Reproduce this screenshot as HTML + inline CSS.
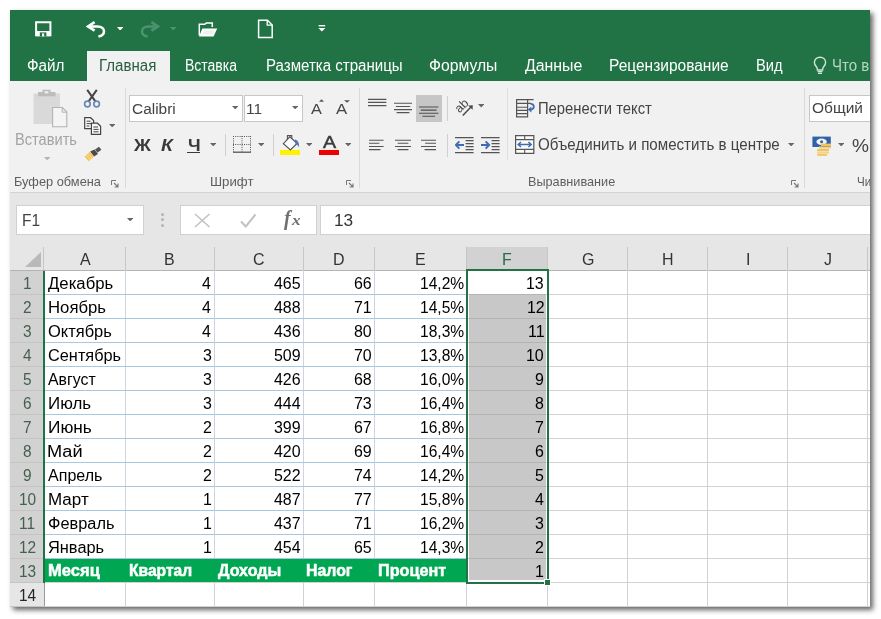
<!DOCTYPE html>
<html lang="ru"><head><meta charset="utf-8"><title>Excel</title>
<style>
html,body{margin:0;padding:0;background:#fff;}
body{width:881px;height:619px;position:relative;overflow:hidden;font-family:"Liberation Sans", sans-serif;}
#win{position:absolute;left:10px;top:10px;width:860px;height:597px;box-shadow:3px 3px 5px 0px rgba(0,0,0,.6);background:#fff;}
#clip{position:absolute;left:0;top:0;width:870px;height:607px;overflow:hidden;will-change:transform;}
.b{position:absolute;display:block;}
.t{position:absolute;white-space:nowrap;transform-origin:0 0;display:block;font-family:"Liberation Sans", sans-serif;}
.sf{font-family:"Liberation Serif", serif;}
</style></head><body>
<div id="win"></div>
<div id="clip">
<div class="b" style="left:10px;top:10px;width:860px;height:71px;background:#217346;"></div>
<div class="b" style="left:87px;top:51px;width:83px;height:30px;background:#f1f1f1;"></div>
<div class="b" style="left:10px;top:81px;width:860px;height:111px;background:#f1f1f1;"></div>
<div class="b" style="left:10px;top:192px;width:860px;height:1px;background:#d4d4d4;"></div>
<div class="b" style="left:10px;top:193px;width:860px;height:54px;background:#e6e6e6;"></div>
<div class="b" style="left:129px;top:95px;width:114px;height:27px;background:#fff;border:1px solid #c6c6c6;box-sizing:border-box;"></div>
<div class="b" style="left:244px;top:95px;width:59px;height:27px;background:#fff;border:1px solid #c6c6c6;box-sizing:border-box;"></div>
<div class="b" style="left:809px;top:95px;width:71px;height:27px;background:#fff;border:1px solid #c6c6c6;box-sizing:border-box;"></div>
<div class="b" style="left:416px;top:95px;width:26px;height:27px;background:#c6c6c6;"></div>
<div class="b" style="left:124.5px;top:88px;width:1px;height:100px;background:#dadada;"></div>
<div class="b" style="left:359px;top:88px;width:1px;height:100px;background:#dadada;"></div>
<div class="b" style="left:804px;top:88px;width:1px;height:100px;background:#dadada;"></div>
<div class="b" style="left:507px;top:88px;width:1px;height:72px;background:#dedede;"></div>
<div class="b" style="left:224.5px;top:134px;width:1px;height:22px;background:#d0d0d0;"></div>
<div class="b" style="left:272.5px;top:134px;width:1px;height:22px;background:#d0d0d0;"></div>
<div class="b" style="left:447px;top:96px;width:1px;height:25px;background:#d0d0d0;"></div>
<div class="b" style="left:447px;top:134px;width:1px;height:23px;background:#d0d0d0;"></div>
<svg class="b" style="left:231.8px;top:105.8px" width="6.4" height="3.4" viewBox="0 0 6.4 3.4"><path d="M0 0H6.4L3.2 3.4Z" fill="#666"/></svg>
<svg class="b" style="left:291.8px;top:105.8px" width="6.4" height="3.4" viewBox="0 0 6.4 3.4"><path d="M0 0H6.4L3.2 3.4Z" fill="#666"/></svg>
<svg class="b" style="left:209.8px;top:142.8px" width="6.4" height="3.4" viewBox="0 0 6.4 3.4"><path d="M0 0H6.4L3.2 3.4Z" fill="#666"/></svg>
<svg class="b" style="left:257.8px;top:142.8px" width="6.4" height="3.4" viewBox="0 0 6.4 3.4"><path d="M0 0H6.4L3.2 3.4Z" fill="#666"/></svg>
<svg class="b" style="left:305.8px;top:142.8px" width="6.4" height="3.4" viewBox="0 0 6.4 3.4"><path d="M0 0H6.4L3.2 3.4Z" fill="#666"/></svg>
<svg class="b" style="left:344.8px;top:142.8px" width="6.4" height="3.4" viewBox="0 0 6.4 3.4"><path d="M0 0H6.4L3.2 3.4Z" fill="#666"/></svg>
<svg class="b" style="left:477.8px;top:104.3px" width="6.4" height="3.4" viewBox="0 0 6.4 3.4"><path d="M0 0H6.4L3.2 3.4Z" fill="#666"/></svg>
<svg class="b" style="left:788.2px;top:142.8px" width="6.4" height="3.4" viewBox="0 0 6.4 3.4"><path d="M0 0H6.4L3.2 3.4Z" fill="#666"/></svg>
<svg class="b" style="left:837.8px;top:142.8px" width="6.4" height="3.4" viewBox="0 0 6.4 3.4"><path d="M0 0H6.4L3.2 3.4Z" fill="#666"/></svg>
<svg class="b" style="left:108.8px;top:123.8px" width="6.4" height="3.4" viewBox="0 0 6.4 3.4"><path d="M0 0H6.4L3.2 3.4Z" fill="#666"/></svg>
<svg class="b" style="left:43.8px;top:156.8px" width="6.4" height="3.4" viewBox="0 0 6.4 3.4"><path d="M0 0H6.4L3.2 3.4Z" fill="#b5b5b5"/></svg>
<div class="b" style="left:187.4px;top:152px;width:12.8px;height:1.3px;background:#3b3b3b;"></div>
<div class="b" style="left:279.7px;top:150px;width:20.3px;height:5px;background:#fff200;"></div>
<div class="b" style="left:319px;top:150.4px;width:20px;height:4.4px;background:#ee0000;"></div>
<svg class="b" style="left:319.4px;top:99px" width="5" height="3" viewBox="0 0 5 3"><path d="M0 2.8L2.5 0.2L5 2.8Z" fill="#555"/></svg>
<svg class="b" style="left:344.2px;top:99.8px" width="6" height="3" viewBox="0 0 6 3"><path d="M0 0.2L3 2.8L6 0.2Z" fill="#555"/></svg>
<svg class="b" style="left:110.5px;top:179.5px" width="8" height="8" viewBox="0 0 8 8"><path d="M0.5 5V0.5H5" fill="none" stroke="#777" stroke-width="1"/><path d="M3 3L7 7M7 3.6V7H3.6" fill="none" stroke="#777" stroke-width="1.1"/></svg>
<svg class="b" style="left:346px;top:179.5px" width="8" height="8" viewBox="0 0 8 8"><path d="M0.5 5V0.5H5" fill="none" stroke="#777" stroke-width="1"/><path d="M3 3L7 7M7 3.6V7H3.6" fill="none" stroke="#777" stroke-width="1.1"/></svg>
<svg class="b" style="left:790.5px;top:179.5px" width="8" height="8" viewBox="0 0 8 8"><path d="M0.5 5V0.5H5" fill="none" stroke="#777" stroke-width="1"/><path d="M3 3L7 7M7 3.6V7H3.6" fill="none" stroke="#777" stroke-width="1.1"/></svg>
<div class="b" style="left:16px;top:205px;width:128px;height:30px;background:#fff;border:1px solid #d0d0d0;box-sizing:border-box;"></div>
<div class="b" style="left:180px;top:205px;width:137px;height:30px;background:#fff;border:1px solid #d0d0d0;box-sizing:border-box;"></div>
<div class="b" style="left:320px;top:205px;width:560px;height:30px;background:#fff;border:1px solid #d0d0d0;box-sizing:border-box;"></div>
<svg class="b" style="left:126.8px;top:217.8px" width="6.4" height="3.4" viewBox="0 0 6.4 3.4"><path d="M0 0H6.4L3.2 3.4Z" fill="#666"/></svg>
<div class="b" style="left:160.5px;top:212.5px;width:3px;height:3px;background:#b4b4b4;border-radius:1.5px;"></div>
<div class="b" style="left:160.5px;top:218px;width:3px;height:3px;background:#b4b4b4;border-radius:1.5px;"></div>
<div class="b" style="left:160.5px;top:223.5px;width:3px;height:3px;background:#b4b4b4;border-radius:1.5px;"></div>
<svg class="b" style="left:194px;top:213px" width="17" height="15" viewBox="0 0 17 15"><path d="M1 1L15.5 14M15.5 1L1 14" stroke="#c2c2c2" stroke-width="1.6" fill="none"/></svg>
<svg class="b" style="left:240px;top:213px" width="17" height="15" viewBox="0 0 17 15"><path d="M1 8.5L5.8 13.5L15.5 1.5" stroke="#c2c2c2" stroke-width="2" fill="none"/></svg>
<div class="b" style="left:10px;top:247px;width:860px;height:23px;background:#e6e6e6;"></div>
<div class="b" style="left:44px;top:270px;width:826px;height:337px;background:#fff;"></div>
<div class="b" style="left:10px;top:270px;width:34px;height:337px;background:#e6e6e6;"></div>
<div class="b" style="left:10px;top:270px;width:34px;height:312px;background:#d2d2d2;"></div>
<div class="b" style="left:467px;top:247px;width:81px;height:23px;background:#d2d2d2;"></div>
<svg class="b" style="left:25px;top:252px" width="16" height="15" viewBox="0 0 16 15"><path d="M16 0V15H0Z" fill="#b9b9b9"/></svg>
<div class="b" style="left:43px;top:247px;width:1px;height:23px;background:#c6c6c6;"></div>
<div class="b" style="left:125px;top:247px;width:1px;height:23px;background:#c6c6c6;"></div>
<div class="b" style="left:214px;top:247px;width:1px;height:23px;background:#c6c6c6;"></div>
<div class="b" style="left:303px;top:247px;width:1px;height:23px;background:#c6c6c6;"></div>
<div class="b" style="left:374px;top:247px;width:1px;height:23px;background:#c6c6c6;"></div>
<div class="b" style="left:466px;top:247px;width:1px;height:23px;background:#c6c6c6;"></div>
<div class="b" style="left:547px;top:247px;width:1px;height:23px;background:#c6c6c6;"></div>
<div class="b" style="left:627px;top:247px;width:1px;height:23px;background:#c6c6c6;"></div>
<div class="b" style="left:707px;top:247px;width:1px;height:23px;background:#c6c6c6;"></div>
<div class="b" style="left:787px;top:247px;width:1px;height:23px;background:#c6c6c6;"></div>
<div class="b" style="left:867px;top:247px;width:1px;height:23px;background:#c6c6c6;"></div>
<div class="b" style="left:10px;top:270px;width:860px;height:1px;background:#b4b4b4;"></div>
<div class="b" style="left:10px;top:294px;width:34px;height:1px;background:#c4c4c4;"></div>
<div class="b" style="left:10px;top:318px;width:34px;height:1px;background:#c4c4c4;"></div>
<div class="b" style="left:10px;top:342px;width:34px;height:1px;background:#c4c4c4;"></div>
<div class="b" style="left:10px;top:366px;width:34px;height:1px;background:#c4c4c4;"></div>
<div class="b" style="left:10px;top:390px;width:34px;height:1px;background:#c4c4c4;"></div>
<div class="b" style="left:10px;top:414px;width:34px;height:1px;background:#c4c4c4;"></div>
<div class="b" style="left:10px;top:438px;width:34px;height:1px;background:#c4c4c4;"></div>
<div class="b" style="left:10px;top:462px;width:34px;height:1px;background:#c4c4c4;"></div>
<div class="b" style="left:10px;top:486px;width:34px;height:1px;background:#c4c4c4;"></div>
<div class="b" style="left:10px;top:510px;width:34px;height:1px;background:#c4c4c4;"></div>
<div class="b" style="left:10px;top:534px;width:34px;height:1px;background:#c4c4c4;"></div>
<div class="b" style="left:10px;top:558px;width:34px;height:1px;background:#c4c4c4;"></div>
<div class="b" style="left:10px;top:582px;width:34px;height:1px;background:#c4c4c4;"></div>
<div class="b" style="left:10px;top:606px;width:34px;height:1px;background:#c4c4c4;"></div>
<div class="b" style="left:44px;top:270px;width:1px;height:337px;background:#9a9a9a;"></div>
<div class="b" style="left:125px;top:270px;width:1px;height:337px;background:#d2d2d2;"></div>
<div class="b" style="left:214px;top:270px;width:1px;height:337px;background:#d2d2d2;"></div>
<div class="b" style="left:303px;top:270px;width:1px;height:337px;background:#d2d2d2;"></div>
<div class="b" style="left:374px;top:270px;width:1px;height:337px;background:#d2d2d2;"></div>
<div class="b" style="left:466px;top:270px;width:1px;height:337px;background:#d2d2d2;"></div>
<div class="b" style="left:547px;top:270px;width:1px;height:337px;background:#d2d2d2;"></div>
<div class="b" style="left:627px;top:270px;width:1px;height:337px;background:#d2d2d2;"></div>
<div class="b" style="left:707px;top:270px;width:1px;height:337px;background:#d2d2d2;"></div>
<div class="b" style="left:787px;top:270px;width:1px;height:337px;background:#d2d2d2;"></div>
<div class="b" style="left:867px;top:270px;width:1px;height:337px;background:#d2d2d2;"></div>
<div class="b" style="left:44px;top:294px;width:826px;height:1px;background:#d2d2d2;"></div>
<div class="b" style="left:44px;top:318px;width:826px;height:1px;background:#d2d2d2;"></div>
<div class="b" style="left:44px;top:342px;width:826px;height:1px;background:#d2d2d2;"></div>
<div class="b" style="left:44px;top:366px;width:826px;height:1px;background:#d2d2d2;"></div>
<div class="b" style="left:44px;top:390px;width:826px;height:1px;background:#d2d2d2;"></div>
<div class="b" style="left:44px;top:414px;width:826px;height:1px;background:#d2d2d2;"></div>
<div class="b" style="left:44px;top:438px;width:826px;height:1px;background:#d2d2d2;"></div>
<div class="b" style="left:44px;top:462px;width:826px;height:1px;background:#d2d2d2;"></div>
<div class="b" style="left:44px;top:486px;width:826px;height:1px;background:#d2d2d2;"></div>
<div class="b" style="left:44px;top:510px;width:826px;height:1px;background:#d2d2d2;"></div>
<div class="b" style="left:44px;top:534px;width:826px;height:1px;background:#d2d2d2;"></div>
<div class="b" style="left:44px;top:558px;width:826px;height:1px;background:#d2d2d2;"></div>
<div class="b" style="left:44px;top:582px;width:826px;height:1px;background:#d2d2d2;"></div>
<div class="b" style="left:44px;top:606px;width:826px;height:1px;background:#d2d2d2;"></div>
<div class="b" style="left:125px;top:271px;width:1px;height:287px;background:#cdd6e0;"></div>
<div class="b" style="left:214px;top:271px;width:1px;height:287px;background:#cdd6e0;"></div>
<div class="b" style="left:303px;top:271px;width:1px;height:287px;background:#cdd6e0;"></div>
<div class="b" style="left:374px;top:271px;width:1px;height:287px;background:#cdd6e0;"></div>
<div class="b" style="left:45px;top:294px;width:422px;height:1px;background:#a9c6e4;"></div>
<div class="b" style="left:45px;top:318px;width:422px;height:1px;background:#a9c6e4;"></div>
<div class="b" style="left:45px;top:342px;width:422px;height:1px;background:#a9c6e4;"></div>
<div class="b" style="left:45px;top:366px;width:422px;height:1px;background:#a9c6e4;"></div>
<div class="b" style="left:45px;top:390px;width:422px;height:1px;background:#a9c6e4;"></div>
<div class="b" style="left:45px;top:414px;width:422px;height:1px;background:#a9c6e4;"></div>
<div class="b" style="left:45px;top:438px;width:422px;height:1px;background:#a9c6e4;"></div>
<div class="b" style="left:45px;top:462px;width:422px;height:1px;background:#a9c6e4;"></div>
<div class="b" style="left:45px;top:486px;width:422px;height:1px;background:#a9c6e4;"></div>
<div class="b" style="left:45px;top:510px;width:422px;height:1px;background:#a9c6e4;"></div>
<div class="b" style="left:45px;top:534px;width:422px;height:1px;background:#a9c6e4;"></div>
<div class="b" style="left:45px;top:558px;width:422px;height:1px;background:#a9c6e4;"></div>
<div class="b" style="left:44px;top:559px;width:423px;height:23px;background:#00a651;"></div>
<div class="b" style="left:469px;top:294px;width:77px;height:286px;background:#c8c8c8;"></div>
<div class="b" style="left:469px;top:294px;width:77px;height:1px;background:#b4b4b4;"></div>
<div class="b" style="left:469px;top:318px;width:77px;height:1px;background:#b4b4b4;"></div>
<div class="b" style="left:469px;top:342px;width:77px;height:1px;background:#b4b4b4;"></div>
<div class="b" style="left:469px;top:366px;width:77px;height:1px;background:#b4b4b4;"></div>
<div class="b" style="left:469px;top:390px;width:77px;height:1px;background:#b4b4b4;"></div>
<div class="b" style="left:469px;top:414px;width:77px;height:1px;background:#b4b4b4;"></div>
<div class="b" style="left:469px;top:438px;width:77px;height:1px;background:#b4b4b4;"></div>
<div class="b" style="left:469px;top:462px;width:77px;height:1px;background:#b4b4b4;"></div>
<div class="b" style="left:469px;top:486px;width:77px;height:1px;background:#b4b4b4;"></div>
<div class="b" style="left:469px;top:510px;width:77px;height:1px;background:#b4b4b4;"></div>
<div class="b" style="left:469px;top:534px;width:77px;height:1px;background:#b4b4b4;"></div>
<div class="b" style="left:469px;top:558px;width:77px;height:1px;background:#b4b4b4;"></div>
<div class="b" style="left:466px;top:269px;width:83px;height:315px;border:2px solid #217346;box-sizing:border-box;"></div>
<div class="b" style="left:44px;top:268.8px;width:423px;height:1.4px;"></div>
<div class="b" style="left:467px;top:268.5px;width:81px;height:1.5px;background:#217346;"></div>
<div class="b" style="left:43px;top:271px;width:2px;height:312px;background:#217346;"></div>
<div class="b" style="left:544px;top:579px;width:7px;height:7px;background:#fff;"></div>
<div class="b" style="left:545px;top:580px;width:5px;height:5px;background:#217346;"></div>
<svg class="b" style="left:35px;top:21px" width="17" height="16" viewBox="0 0 17 16"><path d="M1.1 1.3H15.4V14.2H1.1Z" fill="none" stroke="#ffffff" stroke-width="2"/><path d="M1 10H15.6V15.2H1Z" fill="#ffffff"/><path d="M4.8 11.4H11.4V15.4H4.8Z" fill="#217346"/><path d="M7 12.4H9.2V15.4H7Z" fill="#ffffff"/></svg>
<svg class="b" style="left:86px;top:21px" width="20" height="17" viewBox="0 0 20 17"><path d="M8.6 1.2L2 5.4L8.6 9.6" fill="none" stroke="#ffffff" stroke-width="2.6" stroke-linejoin="miter"/><path d="M2.6 5.4H11.6C15.8 5.4 18 8 18 10.4C18 13 15.8 14.8 12.4 15.4" fill="none" stroke="#ffffff" stroke-width="2.5"/></svg>
<svg class="b" style="left:116.5px;top:26.8px" width="6.4" height="3.6" viewBox="0 0 6.4 3.6"><path d="M0 0H6.4L3.2 3.6Z" fill="#ffffff"/></svg>
<svg class="b" style="left:140px;top:21px" width="20" height="17" viewBox="0 0 20 17"><g transform="translate(20,0) scale(-1,1)"><path d="M8.6 1.2L2 5.4L8.6 9.6" fill="none" stroke="#4e9270" stroke-width="2.6" stroke-linejoin="miter"/><path d="M2.6 5.4H11.6C15.8 5.4 18 8 18 10.4C18 13 15.8 14.8 12.4 15.4" fill="none" stroke="#4e9270" stroke-width="2.5"/></g></svg>
<svg class="b" style="left:169.8px;top:26.8px" width="6.4" height="3.6" viewBox="0 0 6.4 3.6"><path d="M0 0H6.4L3.2 3.6Z" fill="#4e9270"/></svg>
<svg class="b" style="left:198px;top:22px" width="20" height="15" viewBox="0 0 20 15"><path d="M1.3 13.5V2.2H6.8L8.3 0.9H14.3V5" fill="none" stroke="#ffffff" stroke-width="1.5"/><path d="M1 14.4L4.4 6.4H19.2L15.6 14.4Z" fill="#ffffff"/><path d="M6.2 8.2H16.2L14.6 12.4H4.6Z" fill="#e9efe9" opacity="0.9"/></svg>
<svg class="b" style="left:257px;top:18.5px" width="17" height="20" viewBox="0 0 17 20"><path d="M1.6 1.2H10.4L15.2 6V18.6H1.6Z" fill="none" stroke="#ffffff" stroke-width="1.5"/><path d="M10.2 1.2V6.2H15.2" fill="none" stroke="#ffffff" stroke-width="1.3"/></svg>
<svg class="b" style="left:318px;top:25px" width="8" height="7" viewBox="0 0 8 7"><path d="M0.6 0H7.2V1.4H0.6Z" fill="#ffffff"/><path d="M0.4 3H7.4L3.9 6.6Z" fill="#ffffff"/></svg>
<svg class="b" style="left:812.5px;top:56px" width="14" height="20" viewBox="0 0 14 20"><path d="M7 1.2C3.6 1.2 1.4 3.6 1.4 6.4C1.4 8.6 2.8 9.8 3.8 11.4C4.3 12.2 4.4 13 4.4 14H9.6C9.6 13 9.7 12.2 10.2 11.4C11.2 9.8 12.6 8.6 12.6 6.4C12.6 3.6 10.4 1.2 7 1.2Z" fill="none" stroke="#cfe6d8" stroke-width="1.4"/><path d="M4.6 15.6H9.4M5 17.4H9" stroke="#cfe6d8" stroke-width="1.3" fill="none"/></svg>
<svg class="b" style="left:33px;top:89px" width="35" height="39" viewBox="0 0 35 39"><path d="M0.5 4.5H27V35H0.5Z" fill="#d9d9d9"/><path d="M5 3H9.5V0.8H17.5V3H22.5V7.2H5Z" fill="#bcbcbc"/><path d="M11.6 2.2H15.4V4.4H11.6Z" fill="#ededed"/><path d="M19.6 18.5H29.4L33.8 23V37.8H19.6Z" fill="#f4f4f4" stroke="#b3b3b3" stroke-width="1.1"/><path d="M29.2 18.6V23.2H33.8" fill="none" stroke="#b3b3b3" stroke-width="1"/></svg>
<svg class="b" style="left:83px;top:88.5px" width="18" height="19" viewBox="0 0 18 19"><path d="M4.2 0.8L12.4 12.4M13.8 0.8L5.6 12.4" stroke="#454545" stroke-width="2" fill="none"/><circle cx="4.4" cy="15" r="2.8" fill="none" stroke="#6a87b7" stroke-width="1.7"/><circle cx="13.6" cy="15" r="2.8" fill="none" stroke="#6a87b7" stroke-width="1.7"/></svg>
<svg class="b" style="left:84px;top:117px" width="18" height="18" viewBox="0 0 18 18"><path d="M0.7 0.7H6.6L9.6 3.6V11.6H0.7Z" fill="#fafafa" stroke="#444" stroke-width="1.2"/><path d="M2.6 4.2H6.6M2.6 6.6H7.4M2.6 9H5.4" stroke="#444" stroke-width="1" fill="none"/><path d="M7.4 6.2H13.4L16.6 9.2V17.3H7.4Z" fill="#fafafa" stroke="#444" stroke-width="1.2"/><path d="M9.4 10H14M9.4 12.4H14.6M9.4 14.8H14.6" stroke="#444" stroke-width="1" fill="none"/></svg>
<svg class="b" style="left:84px;top:145.5px" width="18" height="16" viewBox="0 0 18 16"><path d="M11 3.6L15 0.8L17.4 3.8L13.4 6.8Z" fill="#555"/><path d="M6.2 5.6L10.4 3.4L14 8L10 10.6Z" fill="#4a4a4a"/><path d="M0.6 10.4L6 5.8L9.8 10.8L4.6 15.2Z" fill="#f3c354"/><path d="M2.2 9L6.4 14M4 7.6L8.2 12.4" stroke="#fbe7a8" stroke-width="0.9" fill="none"/></svg>
<svg class="b" style="left:232.5px;top:135.8px" width="18" height="17" viewBox="0 0 18 17"><path d="M0 0.5H18" stroke="#555" stroke-width="1" stroke-dasharray="1 1.2" fill="none"/><path d="M0 8.5H18" stroke="#555" stroke-width="1" stroke-dasharray="1 1.2" fill="none"/><path d="M0.5 0V16" stroke="#555" stroke-width="1" stroke-dasharray="1 1.2" fill="none"/><path d="M9 0V16" stroke="#555" stroke-width="1" stroke-dasharray="1 1.2" fill="none"/><path d="M17.5 0V16" stroke="#555" stroke-width="1" stroke-dasharray="1 1.2" fill="none"/><path d="M0 16.2H18" stroke="#555" stroke-width="1.3" fill="none"/></svg>
<svg class="b" style="left:281px;top:134px" width="20" height="17" viewBox="0 0 20 17"><path d="M8.8 2.8L16 9.4L9.4 16L2.4 9.6Z" fill="#fbfbfb" stroke="#555" stroke-width="1.2"/><path d="M6.4 6V1.6H10.8V5" fill="none" stroke="#555" stroke-width="1.1"/><path d="M13.6 5.6C16.8 5.8 18.2 8.6 18.2 13.4C17 11.2 15.8 10 14.2 9.4Z" fill="#4f74b8"/></svg>
<svg class="b" style="left:368px;top:98px" width="20" height="22" viewBox="0 0 20 22"><path d="M0 1.4H18.4M0 4.4H18.4M0 7.6H18.4" stroke="#555" stroke-width="1.1" fill="none"/></svg>
<svg class="b" style="left:394px;top:98px" width="20" height="22" viewBox="0 0 20 22"><path d="M0 5.3H18M1.8 8.5H16.2M0 11.6H18M2.6 14.6H15.4" stroke="#555" stroke-width="1.1" fill="none"/></svg>
<svg class="b" style="left:419px;top:98px" width="20" height="22" viewBox="0 0 20 22"><path d="M0 9H19.4M1.8 12.1H17.6M0 15.3H19.4M3.4 18.3H16" stroke="#4d4d4d" stroke-width="1.1" fill="none"/></svg>
<svg class="b" style="left:369px;top:138px" width="20" height="22" viewBox="0 0 20 22"><path d="M0 2.2H14.6M0 5.3H10.4M0 8.5H14.6M0 11.6H11.4" stroke="#555" stroke-width="1.1" fill="none"/></svg>
<svg class="b" style="left:395px;top:138px" width="20" height="22" viewBox="0 0 20 22"><path d="M0 2.2H16M2.6 5.3H13.4M0 8.5H16M2.6 11.6H13.4" stroke="#555" stroke-width="1.1" fill="none"/></svg>
<svg class="b" style="left:421px;top:138px" width="20" height="22" viewBox="0 0 20 22"><path d="M0 2.2H15M4.2 5.3H15M0 8.5H15M3.6 11.6H15" stroke="#555" stroke-width="1.1" fill="none"/></svg>
<svg class="b" style="left:450px;top:94px" width="28" height="26" viewBox="0 0 28 26"><text x="0" y="0" font-family="Liberation Sans, sans-serif" font-size="12.5" fill="#4a4a4a" transform="translate(9.6,19.6) rotate(-45)">ab</text><path d="M12.8 21.4L21.4 12.6" stroke="#4a4a4a" stroke-width="1.5" fill="none"/><path d="M18.2 11.4L22.8 11.2L22.6 15.8Z" fill="#4a4a4a"/></svg>
<svg class="b" style="left:454.5px;top:136.5px" width="19" height="17" viewBox="0 0 19 17"><path d="M0 0.6H18.6M0 15.6H18.6M10.6 3.6H18.6M10.6 6.6H18.6M10.6 9.6H18.6M10.6 12.6H18.6" stroke="#555" stroke-width="1.1" fill="none"/><path d="M0.8 8H9M4.4 4.4L0.8 8L4.4 11.6" stroke="#3d6cb3" stroke-width="1.9" fill="none"/></svg>
<svg class="b" style="left:480.8px;top:136.5px" width="19" height="17" viewBox="0 0 19 17"><path d="M0 0.6H18.6M0 15.6H18.6M10.6 3.6H18.6M10.6 6.6H18.6M10.6 9.6H18.6M10.6 12.6H18.6" stroke="#555" stroke-width="1.1" fill="none"/><path d="M0 8H8.2M4.6 4.4L8.2 8L4.6 11.6" stroke="#3d6cb3" stroke-width="1.9" fill="none"/></svg>
<svg class="b" style="left:515.5px;top:98.5px" width="20" height="19" viewBox="0 0 20 19"><path d="M0.6 0.6H11.6V17.8H0.6Z" fill="none" stroke="#555" stroke-width="1.2"/><path d="M0.6 4.4H11.6M0.6 8.2H11.6M0.6 11.4H11.6M0.6 14.6H11.6M11.6 0.6H17.6M11.6 4.4H15" stroke="#555" stroke-width="1.1" fill="none"/><path d="M14.4 4.8C18.6 4.4 19.4 10.6 14.2 10.6" fill="none" stroke="#3d6cb3" stroke-width="1.8"/><path d="M11.8 10.6L15.4 7.6V13.6Z" fill="#3d6cb3"/></svg>
<svg class="b" style="left:515px;top:135px" width="20" height="19" viewBox="0 0 20 19"><path d="M0.6 0.6H18.8V18.4H0.6Z" fill="#fbfbfb" stroke="#555" stroke-width="1.2"/><path d="M0.6 4.6H18.8M0.6 14.4H18.8M9.7 0.6V4.6M9.7 14.4V18.4" stroke="#555" stroke-width="1.1" fill="none"/><path d="M3.4 9.5H16M6 7L3.2 9.5L6 12M13.4 7L16.2 9.5L13.4 12" stroke="#3d6cb3" stroke-width="1.5" fill="none"/></svg>
<svg class="b" style="left:812px;top:135.5px" width="20" height="21" viewBox="0 0 20 21"><path d="M0.4 0.6H18.8V11H0.4Z" fill="#2f62a6"/><ellipse cx="9.6" cy="5.8" rx="5.2" ry="3.2" fill="#eef3fa"/><circle cx="9.6" cy="5.8" r="1.5" fill="#2f62a6"/><path d="M9 7.6H19V10H9Z" fill="#f2c45c"/><path d="M7 10.4H19V12.6H7Z" fill="#f6d27e"/><path d="M5.2 13H17V15.2H5.2Z" fill="#f2c45c"/><path d="M5.2 15.6H17V17.6H5.2Z" fill="#f6d27e"/><path d="M5.2 18H15V19.8H5.2Z" fill="#f2c45c"/></svg>

<span class="t" style="left:26.55px;top:54.96px;font-size:16px;line-height:21px;color:#ffffff;transform:scaleX(0.9534);">Файл</span>
<span class="t" style="left:184.84px;top:54.96px;font-size:16px;line-height:21px;color:#ffffff;transform:scaleX(0.8740);">Вставка</span>
<span class="t" style="left:266.05px;top:54.96px;font-size:16px;line-height:21px;color:#ffffff;transform:scaleX(0.9413);">Разметка страницы</span>
<span class="t" style="left:429.22px;top:54.96px;font-size:16px;line-height:21px;color:#ffffff;transform:scaleX(0.9818);">Формулы</span>
<span class="t" style="left:524.66px;top:54.96px;font-size:16px;line-height:21px;color:#ffffff;transform:scaleX(0.9920);">Данные</span>
<span class="t" style="left:609.31px;top:54.96px;font-size:16px;line-height:21px;color:#ffffff;transform:scaleX(0.9685);">Рецензирование</span>
<span class="t" style="left:756.48px;top:54.96px;font-size:16px;line-height:21px;color:#ffffff;transform:scaleX(0.9183);">Вид</span>
<span class="t" style="left:99.25px;top:54.96px;font-size:16px;line-height:21px;color:#2a5c42;transform:scaleX(0.9408);">Главная</span>
<span class="t" style="left:832.31px;top:54.96px;font-size:16px;line-height:21px;color:#b4d6c2;transform:scaleX(0.9408);">Что в</span>
<span class="t" style="left:14.79px;top:128.56px;font-size:16px;line-height:21px;color:#a3a3a3;transform:scaleX(0.9137);">Вставить</span>
<span class="t" style="left:13.74px;top:173.30px;font-size:13px;line-height:17px;color:#5e5e5e;transform:scaleX(0.9844);">Буфер обмена</span>
<span class="t" style="left:209.90px;top:173.30px;font-size:13px;line-height:17px;color:#5e5e5e;transform:scaleX(1.0174);">Шрифт</span>
<span class="t" style="left:528.45px;top:173.30px;font-size:13px;line-height:17px;color:#5e5e5e;transform:scaleX(0.9742);">Выравнивание</span>
<span class="t" style="left:857.09px;top:173.30px;font-size:13px;line-height:17px;color:#5e5e5e;transform:scaleX(0.8922);">Число</span>
<span class="t" style="left:131.68px;top:98.53px;font-size:15.2px;line-height:20px;color:#444;transform:scaleX(1.0149);">Calibri</span>
<span class="t" style="left:245.80px;top:98.53px;font-size:15.2px;line-height:20px;color:#444;transform:scaleX(1.0171);">11</span>
<span class="t" style="left:133.62px;top:134.56px;font-size:16px;line-height:21px;color:#3b3b3b;transform:scaleX(1.1640);font-weight:700;">Ж</span>
<span class="t" style="left:161.34px;top:134.56px;font-size:16px;line-height:21px;color:#3b3b3b;transform:scaleX(1.2014);font-weight:700;font-style:italic;">К</span>
<span class="t" style="left:187.88px;top:134.56px;font-size:16px;line-height:21px;color:#3b3b3b;transform:scaleX(1.1229);font-weight:700;">Ч</span>
<span class="t" style="left:310.91px;top:98.60px;font-size:15px;line-height:20px;color:#444;transform:scaleX(1.0871);">A</span>
<span class="t" style="left:335.80px;top:99.88px;font-size:14.5px;line-height:19px;color:#444;transform:scaleX(1.1556);">A</span>
<span class="t" style="left:322.71px;top:131.51px;font-size:17px;line-height:22px;color:#3b3b3b;transform:scaleX(1.1549);-webkit-text-stroke:0.5px #3b3b3b;">A</span>
<span class="t" style="left:537.59px;top:97.76px;font-size:16px;line-height:21px;color:#444;transform:scaleX(0.9236);">Перенести текст</span>
<span class="t" style="left:538.03px;top:134.36px;font-size:16px;line-height:21px;color:#444;transform:scaleX(0.9450);">Объединить и поместить в центре</span>
<span class="t" style="left:811.52px;top:98.23px;font-size:15.2px;line-height:20px;color:#444;transform:scaleX(1.0196);">Общий</span>
<span class="t" style="left:852.27px;top:132.92px;font-size:19px;line-height:25px;color:#444;transform:scaleX(1.0039);">%</span>
<span class="t" style="left:21.71px;top:210.36px;font-size:16px;line-height:21px;color:#444;transform:scaleX(0.9682);">F1</span>
<span class="t" style="left:333.66px;top:210.36px;font-size:16px;line-height:21px;color:#333;transform:scaleX(1.0786);">13</span>
<span class="t sf" style="left:284.40px;top:204.61px;font-size:21px;line-height:27px;color:#707070;transform:scaleX(0.9506);font-weight:700;font-style:italic;">f</span>
<span class="t sf" style="left:292.00px;top:210.34px;font-size:15px;line-height:20px;color:#707070;transform:scaleX(1.1480);font-weight:700;font-style:italic;">x</span>
<span class="t" style="left:79.71px;top:248.61px;font-size:17px;line-height:22px;color:#333;transform:scaleX(0.9400);">A</span>
<span class="t" style="left:164.46px;top:248.61px;font-size:17px;line-height:22px;color:#333;transform:scaleX(0.9400);">B</span>
<span class="t" style="left:253.24px;top:248.61px;font-size:17px;line-height:22px;color:#333;transform:scaleX(0.9400);">C</span>
<span class="t" style="left:332.98px;top:248.61px;font-size:17px;line-height:22px;color:#333;transform:scaleX(0.9400);">D</span>
<span class="t" style="left:415.36px;top:248.61px;font-size:17px;line-height:22px;color:#333;transform:scaleX(0.9400);">E</span>
<span class="t" style="left:502.29px;top:248.61px;font-size:17px;line-height:22px;color:#2a6a48;transform:scaleX(0.9400);">F</span>
<span class="t" style="left:581.92px;top:248.61px;font-size:17px;line-height:22px;color:#333;transform:scaleX(0.9400);">G</span>
<span class="t" style="left:662.23px;top:248.61px;font-size:17px;line-height:22px;color:#333;transform:scaleX(0.9400);">H</span>
<span class="t" style="left:745.85px;top:248.61px;font-size:17px;line-height:22px;color:#333;transform:scaleX(0.9400);">I</span>
<span class="t" style="left:824.39px;top:248.61px;font-size:17px;line-height:22px;color:#333;transform:scaleX(0.9400);">J</span>
<span class="t" style="left:23.09px;top:272.98px;font-size:16.8px;line-height:22px;color:#46604f;transform:scaleX(0.9200);">1</span>
<span class="t" style="left:23.24px;top:296.98px;font-size:16.8px;line-height:22px;color:#46604f;transform:scaleX(0.9200);">2</span>
<span class="t" style="left:23.29px;top:320.98px;font-size:16.8px;line-height:22px;color:#46604f;transform:scaleX(0.9200);">3</span>
<span class="t" style="left:23.36px;top:344.98px;font-size:16.8px;line-height:22px;color:#46604f;transform:scaleX(0.9200);">4</span>
<span class="t" style="left:23.18px;top:368.98px;font-size:16.8px;line-height:22px;color:#46604f;transform:scaleX(0.9200);">5</span>
<span class="t" style="left:23.22px;top:392.98px;font-size:16.8px;line-height:22px;color:#46604f;transform:scaleX(0.9200);">6</span>
<span class="t" style="left:23.24px;top:416.98px;font-size:16.8px;line-height:22px;color:#46604f;transform:scaleX(0.9200);">7</span>
<span class="t" style="left:23.31px;top:440.98px;font-size:16.8px;line-height:22px;color:#46604f;transform:scaleX(0.9200);">8</span>
<span class="t" style="left:23.24px;top:464.98px;font-size:16.8px;line-height:22px;color:#46604f;transform:scaleX(0.9200);">9</span>
<span class="t" style="left:18.79px;top:488.98px;font-size:16.8px;line-height:22px;color:#46604f;transform:scaleX(0.9200);">10</span>
<span class="t" style="left:19.41px;top:512.98px;font-size:16.8px;line-height:22px;color:#46604f;transform:scaleX(0.9200);">11</span>
<span class="t" style="left:18.85px;top:536.98px;font-size:16.8px;line-height:22px;color:#46604f;transform:scaleX(0.9200);">12</span>
<span class="t" style="left:18.83px;top:560.98px;font-size:16.8px;line-height:22px;color:#46604f;transform:scaleX(0.9200);">13</span>
<span class="t" style="left:18.72px;top:584.98px;font-size:16.8px;line-height:22px;color:#262626;transform:scaleX(0.9200);">14</span>
<span class="t" style="left:48.26px;top:273.23px;font-size:15.8px;line-height:21px;color:#000;transform:scaleX(1.0606);">Декабрь</span>
<span class="t" style="left:202.39px;top:273.23px;font-size:15.8px;line-height:21px;color:#000;transform:scaleX(1.0100);">4</span>
<span class="t" style="left:273.99px;top:273.23px;font-size:15.8px;line-height:21px;color:#000;transform:scaleX(1.0100);">465</span>
<span class="t" style="left:353.88px;top:273.23px;font-size:15.8px;line-height:21px;color:#000;transform:scaleX(1.0100);">66</span>
<span class="t" style="left:419.96px;top:273.23px;font-size:15.8px;line-height:21px;color:#000;transform:scaleX(0.9850);">14,2%</span>
<span class="t" style="left:47.61px;top:297.23px;font-size:15.8px;line-height:21px;color:#000;transform:scaleX(1.0591);">Ноябрь</span>
<span class="t" style="left:202.39px;top:297.23px;font-size:15.8px;line-height:21px;color:#000;transform:scaleX(1.0100);">4</span>
<span class="t" style="left:274.00px;top:297.23px;font-size:15.8px;line-height:21px;color:#000;transform:scaleX(1.0100);">488</span>
<span class="t" style="left:353.89px;top:297.23px;font-size:15.8px;line-height:21px;color:#000;transform:scaleX(1.0100);">71</span>
<span class="t" style="left:419.96px;top:297.23px;font-size:15.8px;line-height:21px;color:#000;transform:scaleX(0.9850);">14,5%</span>
<span class="t" style="left:47.87px;top:321.23px;font-size:15.8px;line-height:21px;color:#000;transform:scaleX(1.0432);">Октябрь</span>
<span class="t" style="left:202.39px;top:321.23px;font-size:15.8px;line-height:21px;color:#000;transform:scaleX(1.0100);">4</span>
<span class="t" style="left:274.03px;top:321.23px;font-size:15.8px;line-height:21px;color:#000;transform:scaleX(1.0100);">436</span>
<span class="t" style="left:353.78px;top:321.23px;font-size:15.8px;line-height:21px;color:#000;transform:scaleX(1.0100);">80</span>
<span class="t" style="left:419.96px;top:321.23px;font-size:15.8px;line-height:21px;color:#000;transform:scaleX(0.9850);">18,3%</span>
<span class="t" style="left:47.67px;top:345.23px;font-size:15.8px;line-height:21px;color:#000;transform:scaleX(1.0333);">Сентябрь</span>
<span class="t" style="left:202.72px;top:345.23px;font-size:15.8px;line-height:21px;color:#000;transform:scaleX(1.0100);">3</span>
<span class="t" style="left:274.06px;top:345.23px;font-size:15.8px;line-height:21px;color:#000;transform:scaleX(1.0100);">509</span>
<span class="t" style="left:353.78px;top:345.23px;font-size:15.8px;line-height:21px;color:#000;transform:scaleX(1.0100);">70</span>
<span class="t" style="left:419.96px;top:345.23px;font-size:15.8px;line-height:21px;color:#000;transform:scaleX(0.9850);">13,8%</span>
<span class="t" style="left:48.16px;top:369.23px;font-size:15.8px;line-height:21px;color:#000;transform:scaleX(1.0025);">Август</span>
<span class="t" style="left:202.72px;top:369.23px;font-size:15.8px;line-height:21px;color:#000;transform:scaleX(1.0100);">3</span>
<span class="t" style="left:274.03px;top:369.23px;font-size:15.8px;line-height:21px;color:#000;transform:scaleX(1.0100);">426</span>
<span class="t" style="left:353.85px;top:369.23px;font-size:15.8px;line-height:21px;color:#000;transform:scaleX(1.0100);">68</span>
<span class="t" style="left:419.96px;top:369.23px;font-size:15.8px;line-height:21px;color:#000;transform:scaleX(0.9850);">16,0%</span>
<span class="t" style="left:47.90px;top:393.23px;font-size:15.8px;line-height:21px;color:#000;transform:scaleX(1.0681);">Июль</span>
<span class="t" style="left:202.72px;top:393.23px;font-size:15.8px;line-height:21px;color:#000;transform:scaleX(1.0100);">3</span>
<span class="t" style="left:273.73px;top:393.23px;font-size:15.8px;line-height:21px;color:#000;transform:scaleX(1.0100);">444</span>
<span class="t" style="left:353.86px;top:393.23px;font-size:15.8px;line-height:21px;color:#000;transform:scaleX(1.0100);">73</span>
<span class="t" style="left:419.96px;top:393.23px;font-size:15.8px;line-height:21px;color:#000;transform:scaleX(0.9850);">16,4%</span>
<span class="t" style="left:47.87px;top:417.23px;font-size:15.8px;line-height:21px;color:#000;transform:scaleX(1.0916);">Июнь</span>
<span class="t" style="left:202.74px;top:417.23px;font-size:15.8px;line-height:21px;color:#000;transform:scaleX(1.0100);">2</span>
<span class="t" style="left:274.06px;top:417.23px;font-size:15.8px;line-height:21px;color:#000;transform:scaleX(1.0100);">399</span>
<span class="t" style="left:353.92px;top:417.23px;font-size:15.8px;line-height:21px;color:#000;transform:scaleX(1.0100);">67</span>
<span class="t" style="left:419.96px;top:417.23px;font-size:15.8px;line-height:21px;color:#000;transform:scaleX(0.9850);">16,8%</span>
<span class="t" style="left:47.49px;top:441.23px;font-size:15.8px;line-height:21px;color:#000;transform:scaleX(1.1512);">Май</span>
<span class="t" style="left:202.74px;top:441.23px;font-size:15.8px;line-height:21px;color:#000;transform:scaleX(1.0100);">2</span>
<span class="t" style="left:273.94px;top:441.23px;font-size:15.8px;line-height:21px;color:#000;transform:scaleX(1.0100);">420</span>
<span class="t" style="left:353.90px;top:441.23px;font-size:15.8px;line-height:21px;color:#000;transform:scaleX(1.0100);">69</span>
<span class="t" style="left:419.96px;top:441.23px;font-size:15.8px;line-height:21px;color:#000;transform:scaleX(0.9850);">16,4%</span>
<span class="t" style="left:48.16px;top:465.23px;font-size:15.8px;line-height:21px;color:#000;transform:scaleX(1.0150);">Апрель</span>
<span class="t" style="left:202.74px;top:465.23px;font-size:15.8px;line-height:21px;color:#000;transform:scaleX(1.0100);">2</span>
<span class="t" style="left:274.07px;top:465.23px;font-size:15.8px;line-height:21px;color:#000;transform:scaleX(1.0100);">522</span>
<span class="t" style="left:353.63px;top:465.23px;font-size:15.8px;line-height:21px;color:#000;transform:scaleX(1.0100);">74</span>
<span class="t" style="left:419.96px;top:465.23px;font-size:15.8px;line-height:21px;color:#000;transform:scaleX(0.9850);">14,2%</span>
<span class="t" style="left:47.59px;top:489.23px;font-size:15.8px;line-height:21px;color:#000;transform:scaleX(1.0761);">Март</span>
<span class="t" style="left:202.72px;top:489.23px;font-size:15.8px;line-height:21px;color:#000;transform:scaleX(1.0100);">1</span>
<span class="t" style="left:274.07px;top:489.23px;font-size:15.8px;line-height:21px;color:#000;transform:scaleX(1.0100);">487</span>
<span class="t" style="left:353.92px;top:489.23px;font-size:15.8px;line-height:21px;color:#000;transform:scaleX(1.0100);">77</span>
<span class="t" style="left:419.96px;top:489.23px;font-size:15.8px;line-height:21px;color:#000;transform:scaleX(0.9850);">15,8%</span>
<span class="t" style="left:47.67px;top:513.23px;font-size:15.8px;line-height:21px;color:#000;transform:scaleX(1.0350);">Февраль</span>
<span class="t" style="left:202.72px;top:513.23px;font-size:15.8px;line-height:21px;color:#000;transform:scaleX(1.0100);">1</span>
<span class="t" style="left:274.07px;top:513.23px;font-size:15.8px;line-height:21px;color:#000;transform:scaleX(1.0100);">437</span>
<span class="t" style="left:353.89px;top:513.23px;font-size:15.8px;line-height:21px;color:#000;transform:scaleX(1.0100);">71</span>
<span class="t" style="left:419.96px;top:513.23px;font-size:15.8px;line-height:21px;color:#000;transform:scaleX(0.9850);">16,2%</span>
<span class="t" style="left:47.55px;top:537.23px;font-size:15.8px;line-height:21px;color:#000;transform:scaleX(1.0363);">Январь</span>
<span class="t" style="left:202.72px;top:537.23px;font-size:15.8px;line-height:21px;color:#000;transform:scaleX(1.0100);">1</span>
<span class="t" style="left:273.73px;top:537.23px;font-size:15.8px;line-height:21px;color:#000;transform:scaleX(1.0100);">454</span>
<span class="t" style="left:353.84px;top:537.23px;font-size:15.8px;line-height:21px;color:#000;transform:scaleX(1.0100);">65</span>
<span class="t" style="left:419.96px;top:537.23px;font-size:15.8px;line-height:21px;color:#000;transform:scaleX(0.9850);">14,3%</span>
<span class="t" style="left:526.46px;top:273.23px;font-size:15.8px;line-height:21px;color:#000;transform:scaleX(1.0100);">13</span>
<span class="t" style="left:526.52px;top:297.23px;font-size:15.8px;line-height:21px;color:#000;transform:scaleX(1.0100);">12</span>
<span class="t" style="left:527.74px;top:321.23px;font-size:15.8px;line-height:21px;color:#000;transform:scaleX(1.0100);">11</span>
<span class="t" style="left:526.38px;top:345.23px;font-size:15.8px;line-height:21px;color:#000;transform:scaleX(1.0100);">10</span>
<span class="t" style="left:535.33px;top:369.23px;font-size:15.8px;line-height:21px;color:#000;transform:scaleX(1.0100);">9</span>
<span class="t" style="left:535.32px;top:393.23px;font-size:15.8px;line-height:21px;color:#000;transform:scaleX(1.0100);">8</span>
<span class="t" style="left:535.34px;top:417.23px;font-size:15.8px;line-height:21px;color:#000;transform:scaleX(1.0100);">7</span>
<span class="t" style="left:535.32px;top:441.23px;font-size:15.8px;line-height:21px;color:#000;transform:scaleX(1.0100);">6</span>
<span class="t" style="left:535.32px;top:465.23px;font-size:15.8px;line-height:21px;color:#000;transform:scaleX(1.0100);">5</span>
<span class="t" style="left:534.99px;top:489.23px;font-size:15.8px;line-height:21px;color:#000;transform:scaleX(1.0100);">4</span>
<span class="t" style="left:535.32px;top:513.23px;font-size:15.8px;line-height:21px;color:#000;transform:scaleX(1.0100);">3</span>
<span class="t" style="left:535.34px;top:537.23px;font-size:15.8px;line-height:21px;color:#000;transform:scaleX(1.0100);">2</span>
<span class="t" style="left:535.32px;top:561.23px;font-size:15.8px;line-height:21px;color:#000;transform:scaleX(1.0100);">1</span>
<span class="t" style="left:48.37px;top:560.48px;font-size:16.5px;line-height:21px;color:#fff;transform:scaleX(1.0031);-webkit-text-stroke:0.5px #fff;font-weight:700;">Месяц</span>
<span class="t" style="left:128.93px;top:560.48px;font-size:16.5px;line-height:21px;color:#fff;transform:scaleX(0.9467);-webkit-text-stroke:0.5px #fff;font-weight:700;">Квартал</span>
<span class="t" style="left:218.34px;top:560.48px;font-size:16.5px;line-height:21px;color:#fff;transform:scaleX(0.9762);-webkit-text-stroke:0.5px #fff;font-weight:700;">Доходы</span>
<span class="t" style="left:306.41px;top:560.48px;font-size:16.5px;line-height:21px;color:#fff;transform:scaleX(0.9620);-webkit-text-stroke:0.5px #fff;font-weight:700;">Налог</span>
<span class="t" style="left:377.89px;top:560.48px;font-size:16.5px;line-height:21px;color:#fff;transform:scaleX(0.9819);-webkit-text-stroke:0.5px #fff;font-weight:700;">Процент</span>
</div>
</body></html>
